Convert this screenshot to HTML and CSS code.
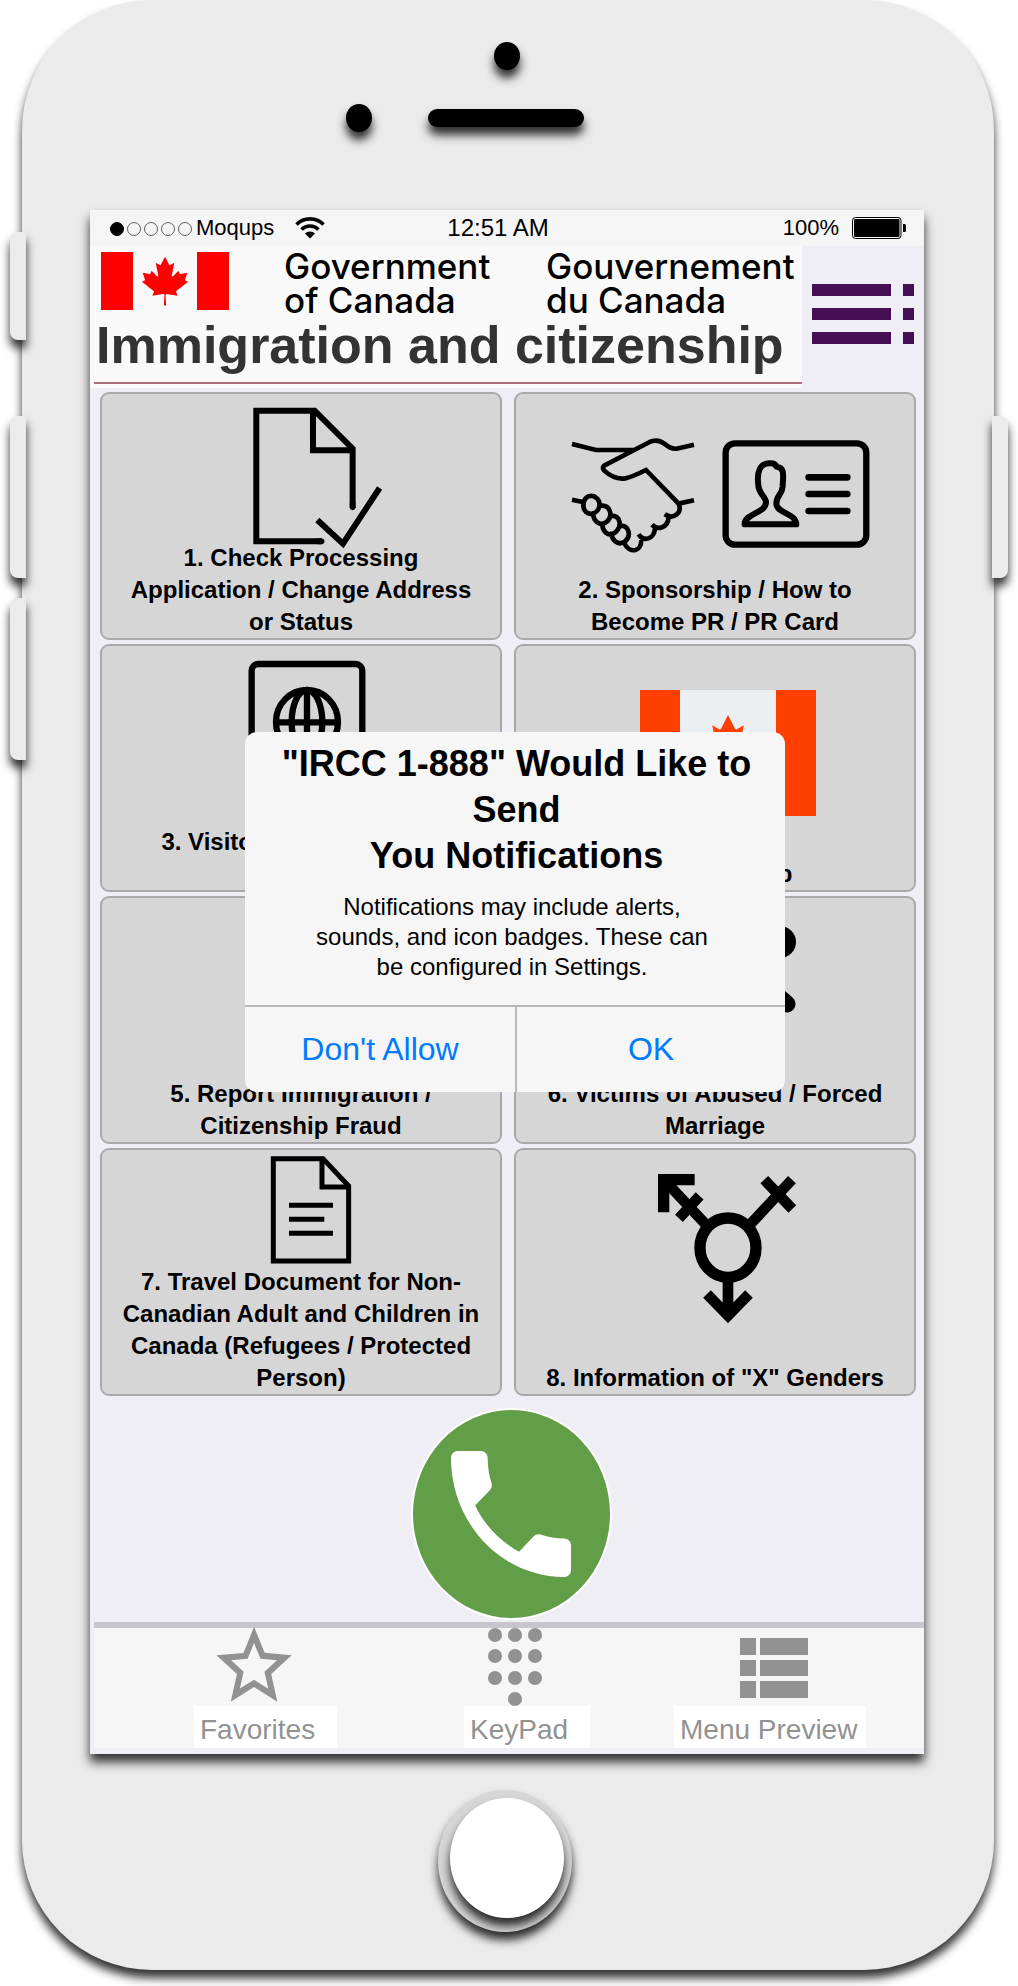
FILE: index.html
```html
<!DOCTYPE html>
<html lang="en">
<head>
<meta charset="utf-8">
<meta name="viewport" content="width=device-width, initial-scale=1">
<title>IRCC 1-888</title>
<link rel="stylesheet" href="styles.css">
</head>
<body>
<svg class="defs" aria-hidden="true">
  <defs>
    <path id="leaf" d="m-90 2030 45-863a95 95 0 0 0-111-98l-859 151 116-320a65 65 0 0 0-20-73l-941-762 212-99a65 65 0 0 0 34-79l-186-572 542 115a65 65 0 0 0 73-38l105-247 423 454a65 65 0 0 0 111-57l-204-1052 327 189a65 65 0 0 0 91-27l332-652 332 652a65 65 0 0 0 91 27l327-189-204 1052a65 65 0 0 0 111 57l423-454 105 247a65 65 0 0 0 73 38l542-115-186 572a65 65 0 0 0 34 79l212 99-941 762a65 65 0 0 0-20 73l116 320-859-151a95 95 0 0 0-111 98l45 863z"/>
  </defs>
</svg>
<div class="phone">
  <span class="side side-mute"></span>
  <span class="side side-up"></span>
  <span class="side side-down"></span>
  <span class="side side-power"></span>

  <div class="bezel-top">
    <span class="lens"></span>
    <div class="earpiece">
      <span class="lens"></span>
      <span class="speaker"></span>
    </div>
  </div>

  <div class="screen">
    <div class="status">
      <div class="status-left">
        <svg width="83" height="16" viewBox="0 0 83 16" aria-hidden="true">
          <g transform="translate(0 2)" fill="none" stroke="#000">
            <circle cx="7" cy="7" r="6.5" fill="#000"/>
            <circle cx="24" cy="7" r="6.5" stroke-width=".6"/>
            <circle cx="41" cy="7" r="6.5" stroke-width=".6"/>
            <circle cx="58" cy="7" r="6.5" stroke-width=".6"/>
            <circle cx="75" cy="7" r="6.5" stroke-width=".6"/>
          </g>
        </svg>
        <span class="carrier">Moqups</span>
        <svg width="30" height="22" viewBox="0 0 30 22" aria-hidden="true">
          <path d="M1.5 7.5a19 19 0 0 1 27 0M6.5 12.5a12 12 0 0 1 17 0" fill="none" stroke="#000" stroke-width="3.6"/>
          <path d="M10 16.5a7 7 0 0 1 10 0l-5 5z"/>
        </svg>
      </div>
      <span class="time">12:51 AM</span>
      <div class="status-right">
        <span>100%</span>
        <svg width="54" height="22" viewBox="0 0 54 22" aria-hidden="true">
          <rect x=".5" y=".5" width="48.500" height="21" rx="3" fill="#f5f5f5" stroke="#000"/>
          <rect x="2" y="2" width="45.500" height="18" rx="1"/>
          <path d="M51 7h1.500q1.500 0 1.500 1.500v5q0 1.500-1.500 1.500h-1.500z"/>
        </svg>
      </div>
    </div>

    <header class="header">
      <div class="brand">
        <div class="wordmark">
          <svg width="128" height="60" viewBox="0 0 128 60" role="img" aria-label="Flag of Canada">
            <path d="M0 1h32v58H0zM96 1h32v58H96z" fill="#fe0000"/>
            <use href="#leaf" transform="translate(64 30) scale(.0124 .0121)" fill="#fe0000"/>
          </svg>
          <p class="gov gov-en">Government<br>of Canada</p>
          <p class="gov" lang="fr">Gouvernement<br>du Canada</p>
        </div>
        <h1>Immigration and citizenship</h1>
      </div>
      <button class="menu" type="button" aria-label="Menu">
        <svg width="102" height="60" viewBox="0 0 102 60" aria-hidden="true">
          <path fill="#460e55" d="M0 0h79v12H0zM91 0h11v12H91zM0 24h79v12H0zM91 24h11v12H91zM0 48h79v12H0zM91 48h11v12H91z"/>
        </svg>
      </button>
    </header>

    <main class="cards">
      <button class="card" type="button">
        <svg viewBox="0 0 398 244" aria-hidden="true">
          <g transform="translate(-22 -14) scale(.3333)" fill="none" stroke="#000" stroke-width="18">
            <path d="M818 384V206L704 92H529V484H726" stroke-linecap="butt"/>
            <path d="M699 92v119h119M712 92" />
            <path d="M712 420 789 491 899 324" stroke-width="18"/>
            <path d="M818 370v12M712 484h13" stroke-linecap="round" stroke-width="17"/>
          </g>
        </svg>
        <span>1. Check Processing Application / Change Address or Status</span>
      </button>

      <button class="card" type="button">
        <svg viewBox="0 0 398 244" aria-hidden="true">
          <g transform="translate(-16 -14) scale(.3333)" fill="none" stroke="#000" stroke-width="14">
            <path d="M216 192 288 210H404M582 194 530 206Q512 208 496 193Q473 175 449 186L312 257Q305 263 313 272Q343 300 376 295Q394 292 438 270L536 371L582 361M216 359L252 367"/>
            <path d="M536 371C548 400 520 420 494 403M506 411C504 444 472 452 456 434M465 446C462 478 430 486 416 463M424 480C424 518 388 520 374 491"/>
            <path d="M250 377C250 335 298 342 299 374C296 407 252 413 250 377ZM299 378C330 372 340 405 322 424C300 444 278 420 280 400M331 407C364 406 366 440 346 457C324 474 303 450 309 429M358 437C390 434 394 470 374 485C354 499 330 477 337 456"/>
            <rect x="677" y="190" width="422" height="304" rx="28" stroke-width="19"/>
            <path d="M734 433C733 400 800 400 798 365C796 350 775 338 775 315C770 275 780 249 810 250Q825 249 830 260C856 262 849 290 848 320C846 345 829 345 829 372C831 400 888 400 889 433Z" stroke-width="18" stroke-linejoin="round"/>
            <path d="M926 292h116M926 342h116M926 393h116" stroke-width="20" stroke-linecap="round"/>
          </g>
        </svg>
        <span>2. Sponsorship / How to Become PR / PR Card</span>
      </button>

      <button class="card" type="button">
        <svg viewBox="0 0 398 244" aria-hidden="true">
          <g transform="translate(-22 -266) scale(.3333)" fill="none" stroke="#000" stroke-width="19">
            <rect x="515" y="852" width="332" height="420" rx="20"/>
            <ellipse cx="681" cy="1026" rx="93" ry="96"/>
            <ellipse cx="681" cy="1026" rx="46" ry="96"/>
            <path d="M681 930v192M588 1027h186"/>
          </g>
        </svg>
        <span>3. Visitor / Student Visa /<br>Permit</span>
      </button>

      <button class="card" type="button">
        <svg viewBox="0 0 398 244" aria-hidden="true">
          <path d="M124 44h176v126H124z" fill="#ebeff2"/>
          <path d="M124 44h40v126h-40zM260 44h40v126h-40z" fill="#ff3f00"/>
          <use href="#leaf" transform="translate(212 111) scale(.0210)" fill="#ff3f00"/>
        </svg>
        <span>4. Citizenship</span>
      </button>

      <button class="card" type="button">
        <svg viewBox="0 0 398 244" aria-hidden="true"></svg>
        <span>5. Report Immigration / Citizenship Fraud</span>
      </button>

      <button class="card" type="button">
        <svg viewBox="0 0 398 244" aria-hidden="true">
          <circle cx="264" cy="44" r="16"/>
          <path d="M250 88 271 106" fill="none" stroke="#000" stroke-width="17" stroke-linecap="round"/>
        </svg>
        <span>6. Victims of Abused / Forced Marriage</span>
      </button>

      <button class="card" type="button">
        <svg viewBox="0 0 398 244" aria-hidden="true">
          <g transform="translate(-22 -20) scale(.3333)" fill="none" stroke="#000" stroke-width="15">
            <path d="M580 86H729L806 168V393H580Z"/>
            <path d="M726 86v85h80"/>
            <path d="M627 226h132M627 268h106M627 310h132"/>
          </g>
        </svg>
        <span>7. Travel Document for Non-Canadian Adult and Children in Canada (Refugees / Protected Person)</span>
      </button>

      <button class="card" type="button">
        <svg viewBox="0 0 398 244" aria-hidden="true">
          <g transform="translate(-16 -20) scale(.3333)" fill="none" stroke="#000" stroke-width="32">
            <ellipse cx="684" cy="353" rx="84" ry="89" stroke-width="34"/>
            <path d="M491 247V149H584" stroke-width="34"/>
            <path d="M505 163 618 284M599 198 537 265M750 284 876 149M793 149 877 237M684 450V550M621 492 684 557 747 492"/>
          </g>
        </svg>
        <span>8. Information of "X" Genders</span>
      </button>
    </main>

    <div class="call-row">
      <button class="call" type="button" aria-label="Call">
        <svg width="120" height="126" viewBox="3 3 18 18" preserveAspectRatio="none" aria-hidden="true">
          <path fill="#fff" d="M6.620 10.790c1.440 2.830 3.760 5.140 6.590 6.590l2.200-2.200c.27-.27.67-.36 1.020-.24 1.120.37 2.330.57 3.570.57.55 0 1 .45 1 1V20c0 .55-.45 1-1 1-9.390 0-17-7.610-17-17 0-.55.45-1 1-1h3.500c.55 0 1 .45 1 1 0 1.250.2 2.450.57 3.570.11.35.03.74-.25 1.020l-2.200 2.200z"/>
        </svg>
      </button>
    </div>

    <nav class="tabs" aria-label="Main">
      <a class="tab" href="#favorites">
        <svg width="78" height="78" viewBox="0 0 78 78" aria-hidden="true">
          <path fill="#929292" transform="translate(-6.200 -9.200) scale(3.770 3.950)" d="M22 9.240l-7.190-.62L12 2 9.190 8.630 2 9.240l5.460 4.730L5.820 21 12 17.270 18.180 21l-1.630-7.030zM12 15.400l-3.760 2.270 1-4.280-3.320-2.880 4.380-.38L12 6.100l1.710 4.040 4.380.38-3.320 2.880 1 4.280z"/>
        </svg>
        <span>Favorites</span>
      </a>
      <a class="tab" href="#keypad">
        <svg width="78" height="78" viewBox="0 0 78 78" aria-hidden="true">
          <g fill="#929292">
            <circle cx="19" cy="7" r="7"/><circle cx="39" cy="7" r="7"/><circle cx="59" cy="7" r="7"/>
            <circle cx="19" cy="28" r="7"/><circle cx="39" cy="28" r="7"/><circle cx="59" cy="28" r="7"/>
            <circle cx="19" cy="50" r="7"/><circle cx="39" cy="50" r="7"/><circle cx="59" cy="50" r="7"/>
            <circle cx="39" cy="71" r="7"/>
          </g>
        </svg>
        <span>KeyPad</span>
      </a>
      <a class="tab tab-wide" href="#menu-preview">
        <svg width="78" height="78" viewBox="0 0 78 78" aria-hidden="true">
          <path fill="#929292" d="M5 10h16v17H5zM25 10h48v17H25zM5 32h16v16H5zM25 32h48v16H25zM5 53h16v17H5zM25 53h48v17H25z"/>
        </svg>
        <span>Menu Preview</span>
      </a>
    </nav>

    <section class="alert" role="alertdialog" aria-labelledby="alert-title" aria-describedby="alert-text">
      <h2 id="alert-title">"IRCC 1-888" Would Like to Send<br>You Notifications</h2>
      <p id="alert-text">Notifications may include alerts, sounds, and icon badges. These can be configured in Settings.</p>
      <div class="alert-actions">
        <button type="button">Don't Allow</button>
        <button type="button">OK</button>
      </div>
    </section>
  </div>

  <div class="bezel-bottom">
    <button class="home" type="button" aria-label="Home"><span></span></button>
  </div>
</div>
</body>
</html>
```
FILE: styles.css
```css
* { box-sizing: border-box; }

body {
  margin: 0;
  background: #fff;
  color: #000;
  font-family: "Liberation Sans", Arial, sans-serif;
}

h1, h2, p { margin: 0; }

button {
  margin: 0;
  padding: 0;
  border: 0;
  background: none;
  color: inherit;
  font: inherit;
}

svg { display: block; flex: none; }
.defs { position: absolute; width: 0; height: 0; }

/* Device */
.phone {
  --shadow: 0 8px 10px rgba(0, 0, 0, .8);
  position: relative;
  margin: 0 24px 16px 22px;
  padding: 0 70px 0 68px;
  border-radius: 130px;
  background: #ebebeb;
  box-shadow: var(--shadow);
}

.side {
  position: absolute;
  left: -12px;
  width: 16px;
  border-radius: 8px 0 0 8px;
  background: #ebebeb;
  box-shadow: var(--shadow);
}
.side-mute { top: 232px; height: 108px; }
.side-up { top: 416px; height: 162px; }
.side-down { top: 598px; height: 162px; }
.side-power {
  top: 416px;
  left: auto;
  right: -14px;
  height: 162px;
  border-radius: 0 8px 8px 0;
}

.bezel-top {
  display: flex;
  flex-direction: column;
  align-items: center;
  gap: 34px;
  height: 210px;
  padding-top: 42px;
}
.lens {
  width: 26px;
  height: 28px;
  border-radius: 50%;
  background: #000;
  box-shadow: var(--shadow);
}
.earpiece {
  display: flex;
  align-items: center;
  gap: 56px;
  padding-right: 84px;
}
.speaker {
  width: 156px;
  height: 18px;
  border-radius: 9px;
  background: #000;
  box-shadow: var(--shadow);
}

.bezel-bottom {
  display: flex;
  justify-content: center;
  padding: 36px 4px 38px 0;
}
.home {
  display: flex;
  width: 134px;
  height: 142px;
  padding: 8px 8px 14px 12px;
  border-radius: 50%;
  background: #d6d6d6;
  box-shadow: var(--shadow);
}
.home span {
  flex: 1;
  border-radius: 50%;
  background: #fff;
  box-shadow: var(--shadow);
}

/* Screen */
.screen {
  position: relative;
  padding-bottom: 6px;
  background: #efeef4;
  box-shadow: 0 8px 10px rgba(0, 0, 0, .8);
}

.status {
  display: grid;
  grid-template-columns: 17fr auto 18fr;
  align-items: center;
  height: 36px;
  padding: 0 18px 0 20px;
  background: #f5f5f5;
  font-size: 22px;
  line-height: 34px;
}
.status-left, .status-right { display: flex; align-items: center; }
.status-left { gap: 3px; }
.status-right { justify-content: flex-end; gap: 13px; }
.carrier { margin-right: 18px; }
.time { font-size: 24px; }

.header { display: flex; height: 142px; }
.brand {
  flex: 712;
  min-width: 0;
  background: #f9f9f9;
}
.wordmark {
  display: flex;
  gap: 55px;
  height: 72px;
  padding: 5px 0 0 11px;
}
.gov {
  margin-top: -2px;
  font-family: Inter, "Liberation Sans", sans-serif;
  font-size: 35px;
  font-weight: 500;
  line-height: 34px;
  white-space: nowrap;
}
.gov-en { width: 207px; }
.header h1 {
  height: 66px;
  margin-left: 4px;
  padding-left: 2px;
  border-bottom: 2px solid #a9707b;
  color: #333;
  font-size: 52px;
  line-height: 54px;
  white-space: nowrap;
}
.menu {
  flex: 122;
  min-width: 0;
  padding-bottom: 6px;
}
.menu svg { margin-left: 10px; }

.cards {
  display: grid;
  grid-template-columns: 1fr 1fr;
  gap: 4px 12px;
  padding: 4px 8px 0 10px;
}
.card {
  display: grid;
  min-height: 248px;
  border: 2px solid #a9a9a9;
  border-radius: 9px;
  background: #d6d6d6;
  font-size: 24px;
  font-weight: 700;
  line-height: 32px;
}
.card svg {
  grid-area: 1 / 1;
  width: 100%;
  height: 244px;
}
.card span {
  grid-area: 1 / 1;
  align-self: end;
  padding: 0 16px;
}

.call-row {
  display: flex;
  justify-content: center;
  padding: 12px 0 2px 8px;
}
.call {
  display: flex;
  align-items: center;
  justify-content: center;
  width: 201px;
  height: 212px;
  border: 2px solid #fff;
  border-radius: 50%;
  background: #629d47;
}

.tabs {
  display: grid;
  grid-template-columns: 27fr 21fr 25fr;
  justify-items: start;
  margin-left: 4px;
  padding-left: 100px;
  border-top: 6px solid #c7c6cc;
  background: #f6f6f6;
}
.tab {
  display: flex;
  flex-direction: column;
  align-items: center;
  color: #929292;
  font-size: 28px;
  line-height: 48px;
  text-decoration: none;
}
.tab svg { margin-right: 24px; overflow: visible; }
.tab span {
  height: 42px;
  padding: 0 22px 0 6px;
  background: #fff;
  white-space: nowrap;
}
.tab-wide svg { margin: 0 0 0 8px; }
.tab-wide span { padding-right: 9px; }

/* Permission alert */
.alert {
  position: absolute;
  top: 522px;
  left: 155px;
  right: 139px;
  padding-top: 9px;
  border-radius: 12px;
  background: #f6f6f6;
  text-align: center;
}
.alert h2 {
  padding-left: 3px;
  font-size: 36px;
  line-height: 46px;
}
.alert p {
  width: 400px;
  margin: 13px auto 23px 67px;
  font-size: 24px;
  line-height: 30px;
}
.alert-actions {
  display: grid;
  grid-template-columns: 1fr 1fr;
  border-top: 2px solid #b7b7b7;
}
.alert-actions button {
  height: 85px;
  color: #007aff;
  font-size: 32px;
}
.alert-actions button + button { border-left: 2px solid #b7b7b7; }
```
